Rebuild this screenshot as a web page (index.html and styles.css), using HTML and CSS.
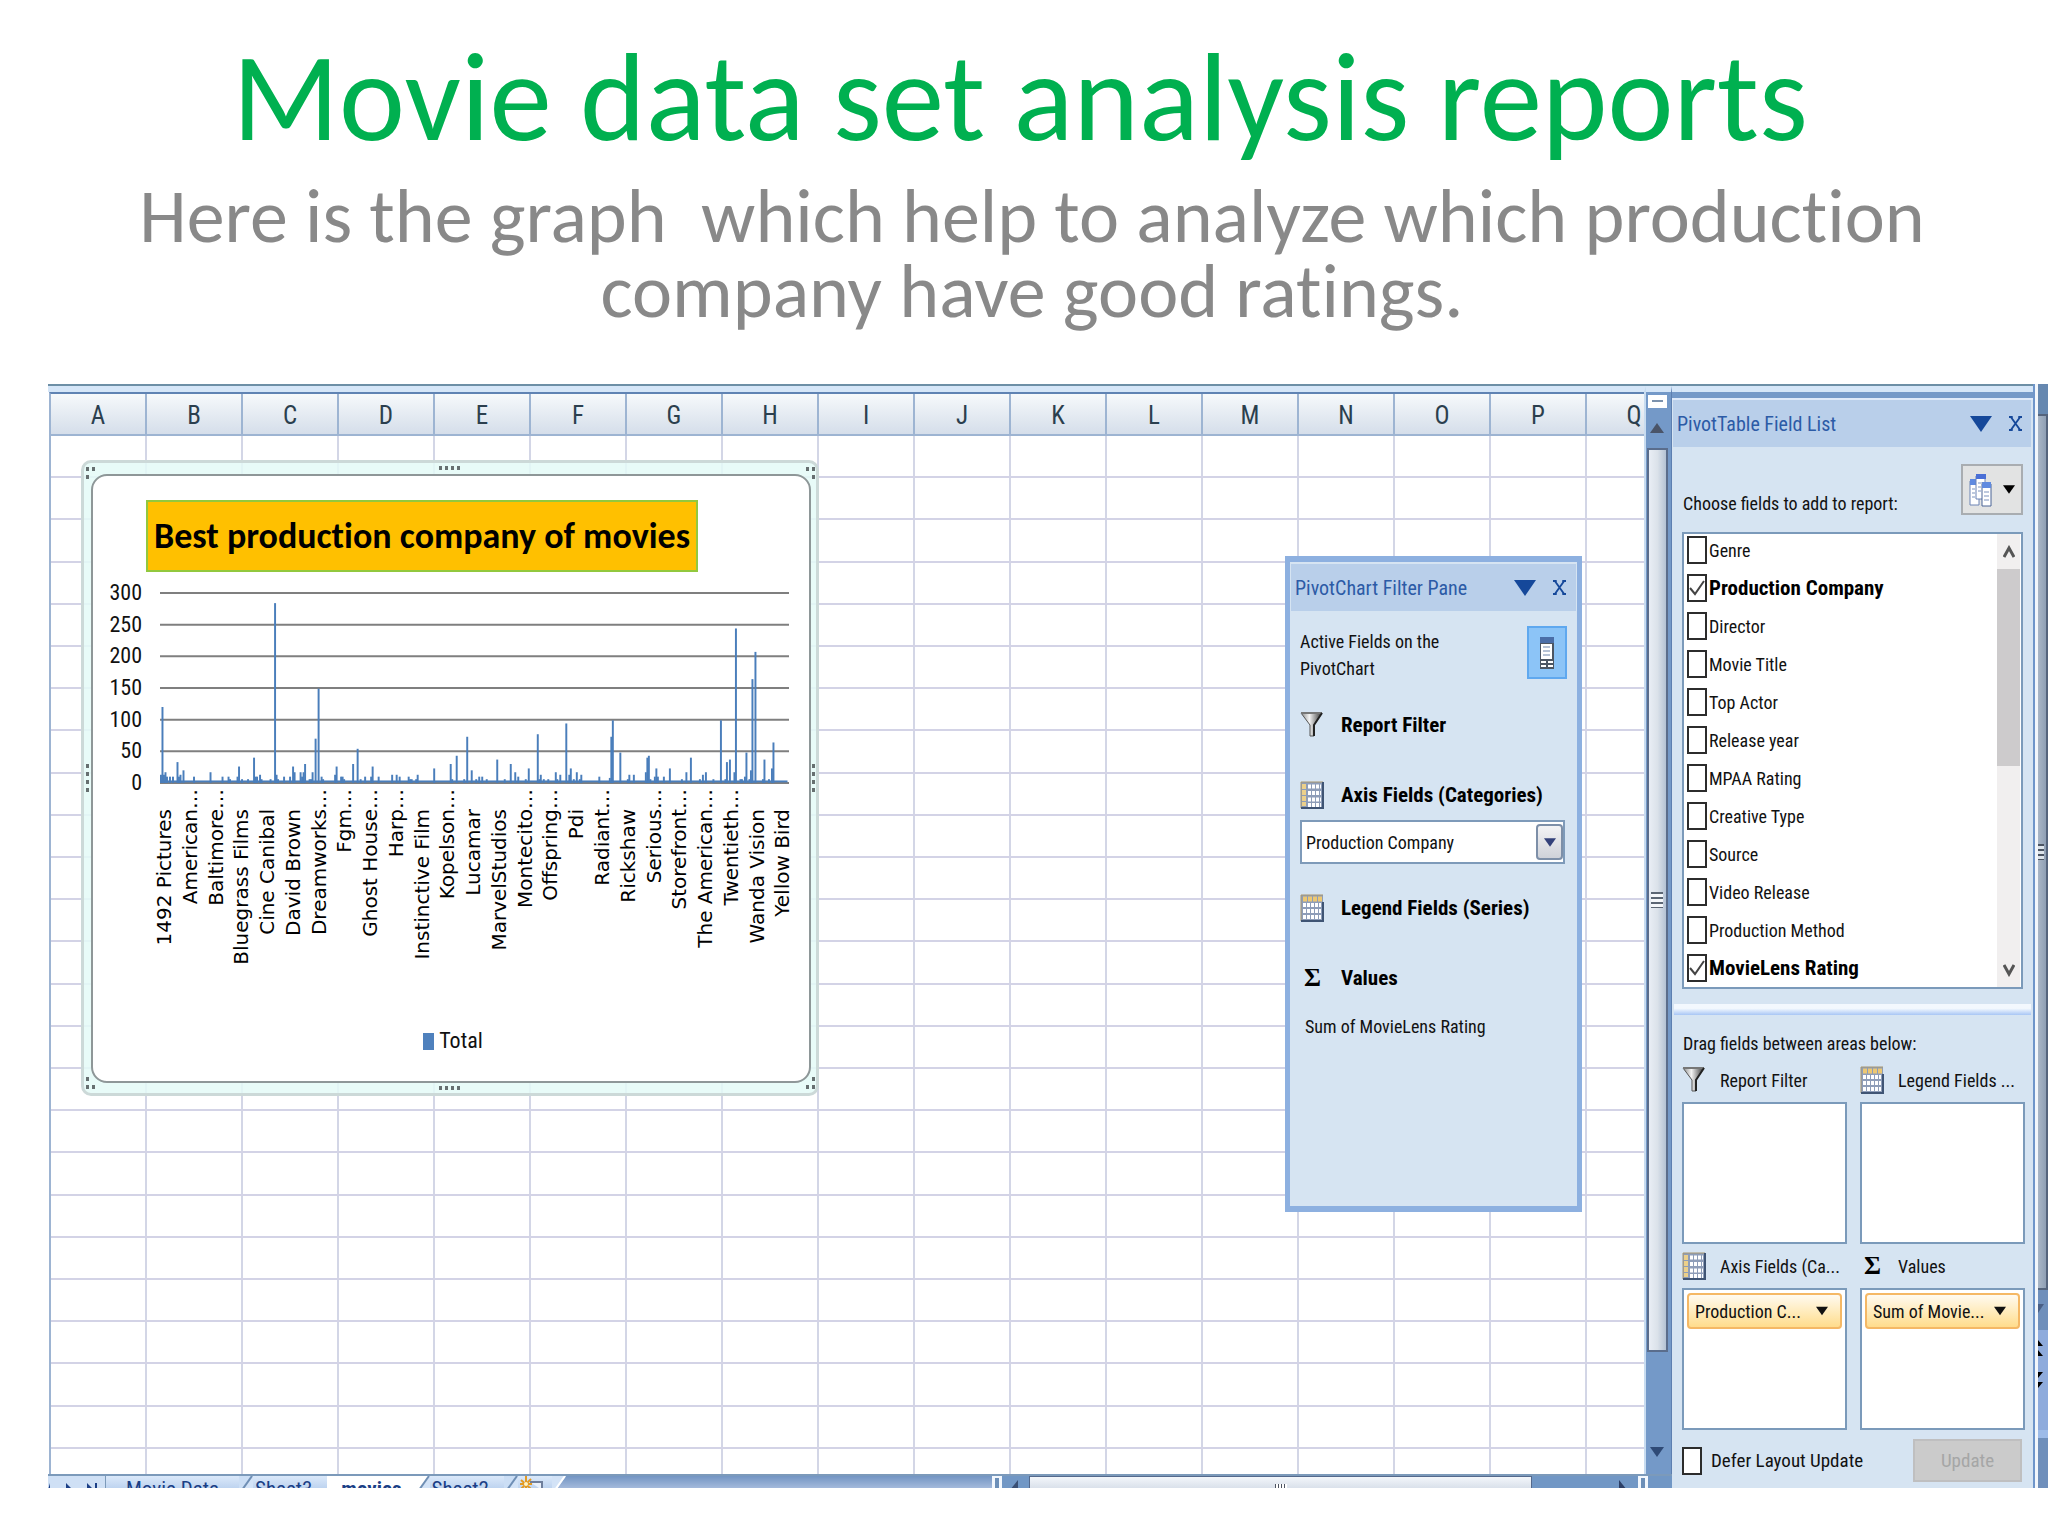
FILE: index.html
```html
<!DOCTYPE html>
<html lang="en">
<head>
    <meta charset="UTF-8">
    <meta name="viewport" content="width=device-width, initial-scale=1.0">
    <title>Movie data set analysis reports</title>
    <link rel="stylesheet" href="styles.css">
</head>
<body>
    <!-- shared icons -->
    <svg class="defs" width="0" height="0" aria-hidden="true">
        <defs>
            <linearGradient id="funnelFill" x1="0" x2="1" y1="0" y2="0">
                <stop offset="0" stop-color="#8a8a8a"/>
                <stop offset="0.4" stop-color="#f4f4f4"/>
                <stop offset="1" stop-color="#333"/>
            </linearGradient>
            <symbol id="icon-funnel" viewBox="0 0 24 28">
                <path d="M1 2H22L14 14V25H10V14Z" fill="url(#funnelFill)" stroke="#555" stroke-width="1"/>
                <path d="M1 2H22" stroke="#777" stroke-width="2"/>
                <path d="M22 2L14 14V25" fill="none" stroke="#222" stroke-width="2"/>
            </symbol>
            <symbol id="icon-axis" viewBox="0 0 24 28">
                <rect x="1" y="1" width="22" height="26" fill="#8e9db8"/>
                <path d="M8 5.500H21M8 12H21M8 18.500H21M8 24H21" stroke="#fff" stroke-width="4" stroke-dasharray="3 1"/>
                <path d="M4 3V25" stroke="#ecd08a" stroke-width="4" stroke-dasharray="5 1"/>
                <path d="M1 27V1H23" fill="none" stroke="#a89770"/>
                <path d="M23 1V27H1" fill="none" stroke="#3f5474" stroke-width="2"/>
            </symbol>
            <symbol id="icon-legend" viewBox="0 0 24 28">
                <rect x="1" y="1" width="22" height="26" fill="#8e9db8"/>
                <path d="M3 11H21M3 17H21M3 23H21" stroke="#fff" stroke-width="4" stroke-dasharray="3 1"/>
                <path d="M3 5H22" stroke="#edc873" stroke-width="5" stroke-dasharray="4 1"/>
                <path d="M1 27V1H23" fill="none" stroke="#a89770"/>
                <path d="M23 8V27H1" fill="none" stroke="#3f5474" stroke-width="2"/>
            </symbol>
            <symbol id="icon-down" viewBox="0 0 22 16">
                <path d="M0 0H22L11 16Z" fill="currentColor"/>
            </symbol>
            <symbol id="icon-close" viewBox="0 0 14 16">
                <path d="M2 1L12 15M12 1L2 15" stroke="currentColor" stroke-width="2"/>
                <path d="M0 1H4M10 1H14M0 15H4M10 15H14" stroke="currentColor" stroke-width="2"/>
            </symbol>
            <symbol id="icon-slant" viewBox="0 0 14 14">
                <path d="M14 0L4 14H14Z" fill="#d3e3f7"/>
                <path d="M13 0L3 14" stroke="#6f8fb5" stroke-width="2"/>
            </symbol>
        </defs>
    </svg>

    <header class="slide-head">
        <h1>Movie data set analysis reports</h1>
        <p>Here is the graph&nbsp; which help to analyze which production<br>company have good ratings.</p>
    </header>

    <main class="workbook">
        <div class="left-side">
            <div class="sheet-wrap">
                <div class="sheet">
                    <div class="columns" id="columns"></div>
                    <div class="cells" id="cells">
                        <section class="chart">
                            <i class="grip corner tl"></i><i class="grip corner tr"></i>
                            <i class="grip corner bl"></i><i class="grip corner br"></i>
                            <i class="grip flat top"></i><i class="grip flat bottom"></i>
                            <i class="grip tall left"></i><i class="grip tall right"></i>
                            <div class="chart-area">
                                <h2>Best production company of movies</h2>
                                <div class="plot">
                                    <div class="y-axis">
                                        <span>300</span><span>250</span><span>200</span><span>150</span><span>100</span><span>50</span><span>0</span>
                                    </div>
                                    <div class="plot-main">
                                        <svg class="bars" id="bars" viewBox="0 0 419 300" preserveAspectRatio="none"></svg>
                                        <ul class="x-axis" id="xAxis"></ul>
                                    </div>
                                </div>
                                <div class="legend"><i></i>Total</div>
                            </div>
                        </section>

                        <aside class="filter-pane">
                            <div class="pane-title">
                                <h3>PivotChart Filter Pane</h3>
                                <button aria-label="Pane options"><svg width="22" height="16"><use href="#icon-down"/></svg></button>
                                <button aria-label="Close"><svg width="13" height="15"><use href="#icon-close"/></svg></button>
                            </div>
                            <div class="filter-body">
                                <div class="active-fields">
                                    <p>Active Fields on the<br>PivotChart</p>
                                    <button aria-label="Show field list">
                                        <svg width="14" height="32" viewBox="0 0 14 32">
                                            <rect width="14" height="32" fill="#4c5663"/>
                                            <rect width="14" height="6" fill="#4a6ea8"/>
                                            <rect x="1" y="7" width="11" height="15" fill="#fff"/>
                                            <path d="M3 10H10M3 14H10M3 18H10" stroke="#6d86ad" stroke-width="1"/>
                                            <path d="M1 25H6M8 25H13M1 29H6M8 29H13" stroke="#fff" stroke-width="2"/>
                                        </svg>
                                    </button>
                                </div>
                                <h4><svg width="24" height="28"><use href="#icon-funnel"/></svg>Report Filter</h4>
                                <h4><svg width="24" height="28"><use href="#icon-axis"/></svg><label for="axisField">Axis Fields (Categories)</label></h4>
                                <div class="axis-select">
                                    <select id="axisField"><option>Production Company</option></select>
                                    <span><svg width="12" height="9"><use href="#icon-down"/></svg></span>
                                </div>
                                <h4><svg width="24" height="28"><use href="#icon-legend"/></svg>Legend Fields (Series)</h4>
                                <h4><b class="sigma">Σ</b>Values</h4>
                                <p class="sum">Sum of MovieLens Rating</p>
                            </div>
                        </aside>
                    </div>
                </div>
                <div class="v-scroll">
                    <div class="split"></div>
                    <button aria-label="Scroll up"><svg width="14" height="10" viewBox="0 0 14 10"><path d="M7 0L14 10H0Z" fill="#4a5468"/></svg></button>
                    <div class="v-thumb"><i></i></div>
                    <button aria-label="Scroll down"><svg width="14" height="10" viewBox="0 0 14 10"><path d="M0 0H14L7 10Z" fill="#2f4a76"/></svg></button>
                </div>
            </div>
            <div class="bottom-bar">
                <div class="tab-nav">
                    <svg width="56" height="14" viewBox="0 0 56 14">
                        <path d="M2 7V14H0ZM18 7L25 14H18ZM39 7L46 14H39ZM47 7V14H49V7Z" fill="#1b3f86"/>
                    </svg>
                </div>
                <button class="tab first">Movie Data</button>
                <svg class="slant" width="14" height="14"><use href="#icon-slant"/></svg>
                <button class="tab">Sheet3</button>
                <button class="tab active">movies</button>
                <svg class="slant white" width="14" height="14"><use href="#icon-slant"/></svg>
                <button class="tab">Sheet2</button>
                <svg class="slant" width="14" height="14"><use href="#icon-slant"/></svg>
                <button class="tab new" aria-label="Insert sheet">
                    <svg width="24" height="14" viewBox="0 0 24 14">
                        <path d="M10 6H22V14" fill="#eaf1fb" stroke="#6f7f9c" stroke-width="2"/>
                        <path d="M6 0V14M1 4L11 13M11 3L1 13M0 8H12" stroke="#e39a22" stroke-width="2"/>
                        <circle cx="6" cy="8" r="2" fill="#fff3c4"/>
                    </svg>
                </button>
                <svg class="slant end" width="14" height="14" viewBox="0 0 14 14">
                    <path d="M0 0H14L4 14H0Z" fill="#d3e3f7"/><path d="M13 0L3 14" stroke="#fff" stroke-width="2"/>
                </svg>
                <div class="tab-space"></div>
                <div class="h-scroll">
                    <i class="h-split"></i>
                    <svg width="27" height="14" viewBox="0 0 27 14"><path d="M16 4V14H8Z" fill="#3a4f74"/></svg>
                    <div class="h-thumb"><i></i></div>
                    <svg class="h-right" width="27" height="14" viewBox="0 0 27 14"><path d="M8 4V14H16Z" fill="#2c3f66"/></svg>
                    <i class="h-split"></i>
                </div>
            </div>
        </div>

        <aside class="field-list">
            <div class="pane-title">
                <h3>PivotTable Field List</h3>
                <button aria-label="Pane options"><svg width="22" height="16"><use href="#icon-down"/></svg></button>
                <button aria-label="Close"><svg width="13" height="15"><use href="#icon-close"/></svg></button>
            </div>
            <div class="choose">
                <p>Choose fields to add to report:</p>
                <button aria-label="Field list layout">
                    <svg width="24" height="34" viewBox="0 0 24 34">
                        <path d="M1 8H10V32H1Z" fill="#fff" stroke="#6d84b5"/><path d="M1 6H10V12H1Z" fill="#5f8ae0"/>
                        <path d="M7 3H16V26H7Z" fill="#fff" stroke="#6d84b5"/><path d="M7 1H17V6H7Z" fill="#4a6fd6"/>
                        <path d="M13 11H22V33H13Z" fill="#fff" stroke="#4b6596"/><path d="M13 9H22V15H13Z" fill="#5f8ae0"/>
                        <path d="M3 16H6M3 20H6M3 24H6M9 10H14M9 14H12M9 18H12M15 19H20M15 23H20M15 27H20" stroke="#7d93bd"/>
                    </svg>
                    <svg width="12" height="9"><use href="#icon-down"/></svg>
                </button>
            </div>
            <div class="fields">
                <div class="field-items">
                    <label><input type="checkbox">Genre</label>
                    <label><input type="checkbox" checked>Production Company</label>
                    <label><input type="checkbox">Director</label>
                    <label><input type="checkbox">Movie Title</label>
                    <label><input type="checkbox">Top Actor</label>
                    <label><input type="checkbox">Release year</label>
                    <label><input type="checkbox">MPAA Rating</label>
                    <label><input type="checkbox">Creative Type</label>
                    <label><input type="checkbox">Source</label>
                    <label><input type="checkbox">Video Release</label>
                    <label><input type="checkbox">Production Method</label>
                    <label><input type="checkbox" checked>MovieLens Rating</label>
                </div>
                <div class="list-scroll">
                    <button aria-label="Up"><svg width="12" height="14" viewBox="0 0 12 14"><path d="M1 12L6 3L11 12" fill="none" stroke="#555" stroke-width="3"/></svg></button>
                    <div class="list-thumb"></div>
                    <button aria-label="Down"><svg width="12" height="14" viewBox="0 0 12 14"><path d="M1 2L6 11L11 2" fill="none" stroke="#555" stroke-width="3"/></svg></button>
                </div>
            </div>
            <div class="divider"></div>
            <p class="drag">Drag fields between areas below:</p>
            <div class="areas">
                <div class="area">
                    <h4><svg width="24" height="28"><use href="#icon-funnel"/></svg>Report Filter</h4>
                    <div class="drop"></div>
                </div>
                <div class="area">
                    <h4><svg width="24" height="28"><use href="#icon-legend"/></svg>Legend Fields ...</h4>
                    <div class="drop"></div>
                </div>
                <div class="area">
                    <h4><svg width="24" height="28"><use href="#icon-axis"/></svg>Axis Fields (Ca...</h4>
                    <div class="drop"><button>Production C...<svg width="12" height="10"><use href="#icon-down"/></svg></button></div>
                </div>
                <div class="area">
                    <h4><b class="sigma">Σ</b>Values</h4>
                    <div class="drop"><button>Sum of Movie...<svg width="12" height="10"><use href="#icon-down"/></svg></button></div>
                </div>
            </div>
            <div class="defer">
                <label><input type="checkbox">Defer Layout Update</label>
                <button disabled>Update</button>
            </div>
        </aside>

        <div class="edge">
            <div class="edge-top"></div>
            <div class="edge-thumb"><i></i></div>
            <div class="edge-arrow"><svg width="8" height="10" viewBox="0 0 8 10"><path d="M0 0H6L0 9Z" fill="#4a5f85"/></svg></div>
            <div class="edge-pages">
                <svg width="8" height="48" viewBox="0 0 8 48"><path d="M0 0L5 6H0ZM0 10L5 16H0ZM0 32H5L0 38ZM0 42H5L0 48Z" fill="#000"/></svg>
            </div>
            <div class="edge-end"></div>
        </div>
    </main>

    <script>
        const columns = document.getElementById('columns');
        'ABCDEFGHIJKLMNOPQ'.split('').forEach(function(letter) {
            const cell = document.createElement('span');
            cell.textContent = letter;
            columns.appendChild(cell);
        });

        const cells = document.getElementById('cells');
        for (let i = 0; i < 25; i++) {
            const row = document.createElement('div');
            row.className = 'row';
            cells.appendChild(row);
        }

        // category index, rating total
        const totals = [
            [0,13],[1,120],[2,13],[3,17],[4,10],[6,10],[8,10],[11,33],[12,10],[13,13],[15,20],[22,10],[33,17],[41,10],
            [45,10],[46,6],[51,10],[52,26],[54,6],[58,6],[62,40],[63,10],[64,10],[66,13],[67,6],[73,6],[76,284],[77,13],
            [78,6],[82,10],[86,10],[88,26],[89,17],[93,17],[94,10],[95,17],[96,30],[99,6],[100,6],[101,17],[103,70],
            [105,149],[107,10],[108,6],[116,13],[117,26],[120,10],[121,10],[122,6],[128,30],[131,54],[133,6],[136,10],
            [140,10],[141,26],[145,10],[154,13],[157,13],[159,10],[165,10],[166,6],[167,6],[170,6],[171,13],[182,23],
            [193,30],[194,6],[197,43],[202,6],[204,73],[207,20],[210,6],[212,10],[214,10],[217,6],[224,37],[229,6],
            [233,30],[236,17],[238,10],[243,6],[245,23],[251,77],[252,6],[253,13],[255,6],[258,6],[263,17],[264,6],
            [266,13],[270,94],[272,13],[273,23],[275,6],[277,17],[279,6],[280,13],[292,10],[299,8],[300,73],[301,99],
            [306,48],[311,6],[312,13],[315,13],[323,17],[324,40],[325,43],[326,6],[329,10],[330,23],[331,10],[335,10],
            [339,23],[347,6],[350,17],[353,40],[359,6],[361,13],[363,17],[368,6],[373,99],[376,6],[377,33],[379,37],
            [382,17],[383,244],[386,6],[387,6],[389,10],[390,48],[392,6],[393,20],[394,164],[396,207],[401,6],[402,37],
            [405,6],[407,23],[408,64]
        ];
        let shapes = '';
        for (let v = 0; v <= 300; v += 50) {
            shapes += `<line x1="0" x2="419" y1="${v}" y2="${v}"/>`;
        }
        shapes += '<rect x="0" y="296" width="418" height="3"/>';
        totals.forEach(function(t) {
            shapes += `<rect x="${t[0]}" y="${300 - t[1]}" width="1.3" height="${t[1]}"/>`;
        });
        document.getElementById('bars').innerHTML = shapes;

        const names = ['1492 Pictures', 'American…', 'Baltimore…', 'Bluegrass Films', 'Cine Canibal', 'David Brown',
            'Dreamworks…', 'Fgm…', 'Ghost House…', 'Harp…', 'Instinctive Film', 'Kopelson…', 'Lucamar', 'MarvelStudios',
            'Montecito…', 'Offspring…', 'Pdi', 'Radiant…', 'Rickshaw', 'Serious…', 'Storefront…', 'The American…',
            'Twentieth…', 'Wanda Vision', 'Yellow Bird'];
        const xAxis = document.getElementById('xAxis');
        names.forEach(function(name) {
            const item = document.createElement('li');
            item.textContent = name;
            if (!name.endsWith('…')) item.className = 'short';
            xAxis.appendChild(item);
        });
    </script>
</body>
</html>
```
FILE: styles.css
```css
* {
    box-sizing: border-box;
}

body {
    margin: 0;
    min-height: 100vh;
    display: flex;
    flex-direction: column;
    background: #fff;
    color: #111;
    font-family: "Roboto Condensed", "Liberation Sans", sans-serif;
    font-size: 18px;
}

h1, h2, h3, h4, p, ul {
    margin: 0;
    padding: 0;
    font-weight: normal;
}

button {
    font: inherit;
    color: inherit;
    border: 0;
    padding: 0;
    background: none;
}

svg {
    display: block;
    flex: none;
}

.defs {
    position: absolute;
}

/* slide heading */
.slide-head {
    padding-top: 22px;
    height: 384px;
    text-align: center;
    font-family: Calibri, Carlito, Lato, sans-serif;
    font-variant-ligatures: no-common-ligatures;
}

.slide-head h1 {
    color: #00b050;
    font-size: 125px;
    line-height: 152px;
    padding-right: 8px;
}

.slide-head p {
    margin-top: 5px;
    padding-left: 16px;
    color: #898989;
    font-size: 76px;
    line-height: 75px;
}

/* workbook */
.workbook {
    flex: 1;
    display: flex;
    margin: 0 0 48px 48px;
    min-height: 0;
}

.left-side {
    flex: 1;
    min-width: 0;
    display: flex;
    flex-direction: column;
    border-top: 2px solid #6d8fa6;
}

.sheet-wrap {
    flex: 1;
    display: flex;
}

.sheet {
    flex: 1;
    min-width: 0;
    display: flex;
    flex-direction: column;
    padding-left: 1px;
    border-top: 6px solid #d5e6f8;
    border-right: 2px solid #c8dcf0;
}

.columns {
    display: flex;
    overflow: hidden;
    height: 44px;
    border-top: 2px solid #5f83b3;
    border-bottom: 2px solid #9db4d2;
    border-left: 2px solid #9db4d2;
    background: linear-gradient(#f6f9fb, #d5deea);
    color: #2b3f4e;
    font-size: 25px;
    line-height: 44px;
    text-align: center;
}

.columns span {
    flex: none;
    width: 96px;
    border-right: 2px solid #9db4d2;
}

.cells {
    flex: 1;
    position: relative;
    display: grid;
    grid-template-rows: repeat(24, 42fr) 25fr;
    border-left: 2px solid #9db4d2;
    background: repeating-linear-gradient(90deg, #fff 0 94px, #d3d6e6 94px 96px);
}

.row {
    border-bottom: 2px solid #d3d3e6;
}

.row:last-child {
    border-bottom: 0;
}

/* chart object, floats over the cells */
.chart {
    position: absolute;
    left: 30px;
    top: 24px;
    width: 738px;
    height: 636px;
    padding: 11px 5px 10px 7px;
    border: 3px solid #ccd9d8;
    border-radius: 10px;
    background: rgba(228, 250, 247, 0.85);
}

.chart-area {
    height: 100%;
    display: flex;
    flex-direction: column;
    padding: 24px 20px 0 0;
    border: 2px solid #8e9798;
    border-radius: 16px;
    background: #fff;
}

.chart h2 {
    align-self: flex-start;
    margin-left: 53px;
    padding: 0 6px;
    border: 2px solid #92c83e;
    background: #ffc000;
    color: #000;
    font-family: Calibri, Carlito, Lato, sans-serif;
    font-size: 36px;
    font-weight: bold;
    font-variant-ligatures: no-common-ligatures;
    line-height: 68px;
}

.plot {
    display: flex;
    margin-top: 5px;
}

.y-axis {
    width: 49px;
    height: 221px;
    display: flex;
    flex-direction: column;
    justify-content: space-between;
    text-align: right;
    font-size: 22px;
    line-height: 32px;
}

.y-axis span {
    height: 32px;
    margin-bottom: -1px;
}

.plot-main {
    flex: 1;
    margin-left: 18px;
    padding-top: 16px;
}

.bars {
    width: 100%;
    height: 190px;
    overflow: visible;
    fill: #4a7ebb;
}

.bars line {
    stroke: #7f7f7f;
    stroke-width: 2px;
    vector-effect: non-scaling-stroke;
}

.x-axis {
    display: flex;
    margin: 6px -6px 0 -9px;
    height: 200px;
    align-items: flex-start;
    list-style: none;
    color: #000;
    font-family: "DejaVu Sans", sans-serif;
    font-size: 20px;
}

.x-axis li {
    flex: 1;
    width: 0;
    display: flex;
    flex-direction: column;
    justify-content: center;
    writing-mode: vertical-rl;
    transform: rotate(180deg);
    line-height: 26px;
    white-space: nowrap;
}

.x-axis .short {
    margin-top: 20px;
}

.legend {
    display: flex;
    align-items: center;
    justify-content: center;
    gap: 5px;
    margin-top: auto;
    margin-bottom: 26px;
    padding-left: 24px;
    font-size: 22px;
    line-height: 28px;
}

.legend i {
    width: 11px;
    height: 17px;
    background: #4f81bd;
}

/* resize grips */
.grip {
    position: absolute;
    width: 3px;
    height: 4px;
    background: #666f70;
}

.grip.flat {
    left: 355px;
    box-shadow: 6px 0 #666f70, 12px 0 #666f70, 18px 0 #666f70;
}

.grip.tall {
    top: 301px;
    box-shadow: 0 8px #666f70, 0 16px #666f70, 0 24px #666f70;
}

.grip.top { top: 3px; }
.grip.bottom { bottom: 3px; }
.grip.left { left: 2px; }
.grip.right { right: 1px; }

.grip.tl { left: 2px; top: 4px; box-shadow: 6px 0 #666f70, 0 8px #666f70; }
.grip.tr { right: 1px; top: 4px; box-shadow: -6px 0 #666f70, 0 8px #666f70; }
.grip.bl { left: 2px; bottom: 4px; box-shadow: 6px 0 #666f70, 0 -8px #666f70; }
.grip.br { right: 1px; bottom: 4px; box-shadow: -6px 0 #666f70, 0 -8px #666f70; }

/* panes */
.pane-title {
    display: flex;
    align-items: center;
    height: 48px;
    padding: 0 11px 0 4px;
    gap: 17px;
    background: #b9cfea;
    color: #15489a;
}

.pane-title h3 {
    flex: 1;
    color: #2c5ba6;
    font-size: 20px;
}

.sigma {
    width: 24px;
    color: #000;
    font-family: "Liberation Serif", serif;
    font-size: 26px;
    line-height: 28px;
    padding-left: 4px;
}

.filter-pane {
    position: absolute;
    right: 62px;
    top: 120px;
    width: 297px;
    height: 656px;
    border: 5px solid #8db0e0;
    border-top-width: 6px;
    border-bottom-width: 6px;
    background: #d6e4f2;
}

.filter-pane .pane-title {
    border: 1px solid #d6e4f2;
    border-width: 2px 1px 0;
    height: 49px;
    padding-right: 10px;
}

.filter-body {
    padding: 15px 10px 0 10px;
}

.active-fields {
    display: flex;
    justify-content: space-between;
    margin-bottom: 27px;
    line-height: 27px;
}

.active-fields p {
    padding-top: 2px;
}

.active-fields button {
    width: 40px;
    height: 53px;
    display: flex;
    align-items: center;
    justify-content: center;
    border: 2px solid #5fa8ef;
    background: #8cc4f7;
}

.filter-body h4 {
    display: flex;
    align-items: center;
    gap: 17px;
    height: 32px;
    margin-bottom: 38px;
    color: #000;
    font-size: 21px;
    font-weight: bold;
}

.filter-body h4:has(+ .axis-select) {
    margin-bottom: 9px;
}

.axis-select {
    position: relative;
    margin-bottom: 28px;
}

.axis-select select {
    appearance: none;
    width: 265px;
    height: 44px;
    padding: 0 4px;
    border: 2px solid #7e9ab9;
    border-radius: 0;
    background: #fff;
    color: #111;
    font: inherit;
}

.axis-select span {
    position: absolute;
    right: 4px;
    top: 4px;
    width: 27px;
    height: 36px;
    display: flex;
    align-items: center;
    justify-content: center;
    border: 2px solid #7d8fa8;
    border-radius: 4px;
    background: linear-gradient(#f3f3f5, #cfd2d9);
    color: #33417a;
    pointer-events: none;
}

.filter-body .sum {
    margin-top: -20px;
    padding-left: 5px;
    line-height: 30px;
}

/* sheet scroll bars */
.v-scroll {
    width: 26px;
    display: flex;
    flex-direction: column;
    align-items: center;
    padding: 3px 4px 16px 1px;
    border-top: 6px solid #d5e6f8;
    border-right: 1px solid #5d7fb0;
    background: #7499c8;
}

.v-scroll .split {
    width: 19px;
    height: 13px;
    padding: 5px 4px;
    background: #fff;
}

.v-scroll .split::before {
    content: "";
    display: block;
    height: 2px;
    background: #7c92ad;
}

.v-scroll button {
    height: 40px;
    display: flex;
    align-items: center;
}

.v-scroll button:last-child {
    margin-top: auto;
    height: 12px;
}

.v-thumb {
    flex: 0 0 85%;
    width: 21px;
    display: flex;
    align-items: center;
    justify-content: center;
    border: 2px solid #5a6d8c;
    background: linear-gradient(90deg, #e9eef5, #dbe2ea 50%, #b3c2d4);
}

.v-thumb i {
    width: 12px;
    height: 16px;
    background: repeating-linear-gradient(#5b6674 0 2px, #f4f7fa 2px 5px);
}

.bottom-bar {
    height: 14px;
    overflow: hidden;
    display: flex;
    align-items: flex-start;
    border-top: 2px solid #7c9aba;
    background: linear-gradient(#7395c3, #a3b9db);
}

.tab-nav {
    width: 58px;
    border-right: 1px solid #7c9aba;
    background: #cfe0f5;
}

.tab {
    display: flex;
    align-items: flex-start;
    height: 40px;
    padding: 0 15px 0 2px;
    background: linear-gradient(#dbe9fa, #b9d0ee 14px);
    color: #1b3f86;
    font-size: 21px;
    line-height: 26px;
}

.tab.first {
    padding: 0 20px;
}

.tab.active {
    padding: 0 14px;
    background: #fff;
    font-weight: bold;
}

.tab.new {
    padding: 0 8px 0 2px;
}

.slant {
    background: #cbdef5;
}

.slant.white {
    background: #fff;
}

.slant.end {
    background: none;
}

.tab-space {
    flex: 1;
}

.h-scroll {
    flex: 0 0 680px;
    height: 14px;
    display: flex;
    padding-right: 24px;
    background: #7197c5;
}

.h-split {
    width: 10px;
    border: 2px solid #f2f7fd;
    border-width: 2px 3px 0;
    background: #6c8fb8;
}

.h-thumb {
    flex: 0 1 503px;
    display: flex;
    justify-content: center;
    border: 1px solid #54698c;
    border-bottom: 0;
    background: linear-gradient(#f3f6fa, #d5dde8);
}

.h-thumb i {
    width: 12px;
    margin-top: 7px;
    background: repeating-linear-gradient(90deg, #4f5562 0 1px, #fff 1px 3px);
}

.h-right {
    margin-left: auto;
}

/* field list */
.field-list {
    flex: 0 0 363px;
    display: flex;
    flex-direction: column;
    padding-top: 14px;
    border-right: 2px solid #6e95ca;
    background: linear-gradient(#6d8fa6 0 2px, #d5e6f8 2px 8px, #7499c8 8px 14px, #dfeafa 14px 16px, #d6e4f2 16px);
}

.field-list .pane-title {
    margin: 2px 2px 0 1px;
    padding-right: 9px;
    height: 47px;
}

.choose {
    display: flex;
    align-items: flex-end;
    justify-content: space-between;
    margin: 17px 10px 17px 11px;
}

.choose p {
    line-height: 22px;
}

.choose button {
    width: 62px;
    height: 51px;
    display: flex;
    align-items: center;
    justify-content: center;
    gap: 10px;
    border: 2px solid #a9adb1;
    background: #e2e3e3;
    color: #000;
}

.fields {
    display: flex;
    height: 457px;
    margin: 0 10px;
    padding-right: 1px;
    border: 2px solid #7b9aba;
    background: #fff;
}

.field-items {
    flex: 1;
    display: grid;
    grid-template-rows: repeat(12, 1fr);
    margin-top: -3px;
}

.field-items label,
.defer label {
    display: flex;
    align-items: center;
    gap: 2px;
}

.field-items label:has(:checked) {
    color: #000;
    font-size: 21px;
    font-weight: bold;
}

input[type="checkbox"] {
    appearance: none;
    flex: none;
    width: 20px;
    height: 28px;
    margin: 0;
    border: 2px solid #2c2c2c;
    background: #fff;
}

.field-items input[type="checkbox"] {
    margin-left: 3px;
}

input[type="checkbox"]:checked {
    background: #fff url("data:image/svg+xml,%3Csvg xmlns='http://www.w3.org/2000/svg' viewBox='0 0 16 24'%3E%3Cpath d='M1 12L6 18L15 5' fill='none' stroke='%23444' stroke-width='2'/%3E%3C/svg%3E") center / 16px 24px no-repeat;
}

.list-scroll {
    width: 23px;
    display: flex;
    flex-direction: column;
    background: #f1efef;
}

.list-scroll button {
    height: 35px;
    display: flex;
    align-items: center;
    justify-content: center;
}

.list-thumb {
    height: 197px;
    background: #cdcbcc;
    margin-bottom: auto;
}

.divider {
    height: 11px;
    margin: 15px 2px 0;
    background: linear-gradient(#f3f8fe 40%, #a8c6f5);
}

.drag {
    margin: 15px 11px 0;
    line-height: 28px;
}

.areas {
    flex: 1;
    display: grid;
    grid-template-columns: 1fr 1fr;
    grid-template-rows: 1fr 1fr;
    column-gap: 13px;
    margin: 0 8px 0 10px;
}

.area {
    display: flex;
    flex-direction: column;
}

.area h4 {
    height: 44px;
    display: flex;
    align-items: center;
    gap: 14px;
    white-space: nowrap;
}

.drop {
    flex: 1;
    padding: 3px;
    border: 2px solid #7b9aba;
    background: #fff;
}

.drop button {
    width: 100%;
    height: 36px;
    display: flex;
    align-items: center;
    justify-content: space-between;
    padding: 0 12px 0 6px;
    border: 2px solid #f5b865;
    border-radius: 4px;
    background: linear-gradient(#fffaf0, #ffe9b4 60%, #ffdc8c);
}

.defer {
    display: flex;
    align-items: center;
    justify-content: space-between;
    height: 58px;
    padding: 3px 11px 0 10px;
    font-size: 19px;
}

.defer label {
    gap: 9px;
}

.defer button {
    width: 109px;
    height: 43px;
    border: 2px solid #bfbfc0;
    background: #cbcbcb;
    color: #a5a6a6;
}

/* scroll bar of the window behind */
.edge {
    flex: 0 0 13px;
    display: flex;
    flex-direction: column;
    border-left: 3px solid #f2f6fb;
    background: #6f8fbb;
}

.edge-top {
    height: 30px;
    background: #6688b0;
}

.edge-thumb {
    flex: 1;
    display: flex;
    align-items: center;
    border: 2px solid #55647c;
    border-left: 0;
    background: linear-gradient(90deg, #a9b6c6, #8f9fb4);
}

.edge-thumb i {
    width: 6px;
    height: 16px;
    background: repeating-linear-gradient(#4c5563 0 2px, #dce3ea 2px 5px);
}

.edge-arrow {
    height: 40px;
    padding-top: 14px;
}

.edge-pages {
    height: 108px;
    padding-top: 10px;
    border-bottom: 8px solid #9dbbe8;
    background: #8eabdc;
}

.edge-end {
    height: 50px;
}
```
